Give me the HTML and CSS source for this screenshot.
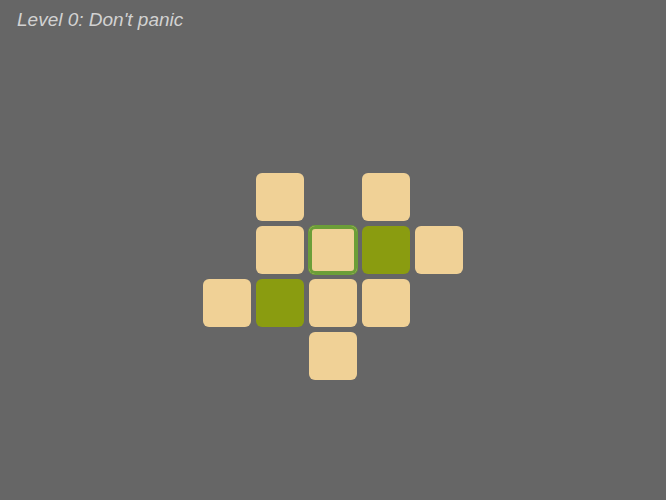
FILE: index.html
```html
<!DOCTYPE html>
<html>
<head>
<meta charset="utf-8">
<link rel="stylesheet" href="styles.css">
</head>
<body>
<div class="title">Level 0: Don't panic</div>
<div class="board">
  <div class="cell"></div><div class="tile"></div><div class="cell"></div><div class="tile"></div><div class="cell"></div>
  <div class="cell"></div><div class="tile"></div><div class="tile selected"></div><div class="tile on"></div><div class="tile"></div>
  <div class="tile"></div><div class="tile on"></div><div class="tile"></div><div class="tile"></div><div class="cell"></div>
  <div class="cell"></div><div class="cell"></div><div class="tile"></div><div class="cell"></div><div class="cell"></div>
</div>
</body>
</html>
```
FILE: styles.css
```css
html, body {
  margin: 0;
  padding: 0;
  background: #666666;
  height: 100%;
}
body {
  font-family: "Liberation Sans", Arial, sans-serif;
}
.title {
  padding: 8px 0 0 17px;
  font-size: 19px;
  line-height: 24px;
  font-style: italic;
  color: #d2d2d2;
}
.board {
  display: grid;
  grid-template-columns: repeat(5, 48px);
  grid-template-rows: repeat(4, 48px);
  gap: 5px;
  width: max-content;
  margin: 141px auto 0;
}
.tile {
  background: #f0d196;
  border-radius: 6px;
}
.tile.on {
  background: #8a9c10;
}
.tile.selected {
  box-shadow: 0 0 0 1px #6c9e38, inset 0 0 0 3px #6c9e38;
}
```
